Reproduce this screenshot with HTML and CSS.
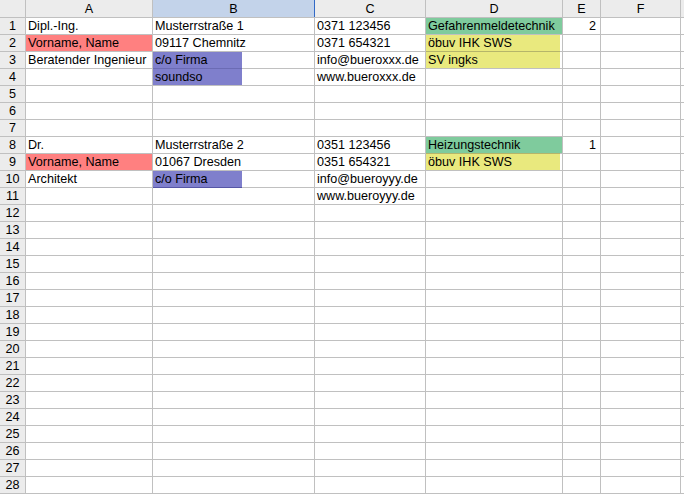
FILE: index.html
```html
<!DOCTYPE html>
<html lang="de">

<head>
    <meta charset="UTF-8">
    <title>Tabelle1</title>
    <link rel="stylesheet" href="styles.css">
</head>

<body>
    <div class="sheet">
        <!-- Spaltenköpfe -->
        <div class="hd"></div><div class="hd">A</div><div class="hd sel">B</div><div class="hd">C</div><div class="hd">D</div><div class="hd">E</div><div class="hd">F</div><div class="hd"></div>

        <div class="rh">1</div><div class="c">Dipl.-Ing.</div><div class="c">Musterrstraße 1</div><div class="c">0371 123456</div><div class="c green">Gefahrenmeldetechnik</div><div class="c num">2</div><div class="c"></div><div class="c"></div>
        <div class="rh">2</div><div class="c red">Vorname, Name</div><div class="c">09117 Chemnitz</div><div class="c">0371 654321</div><div class="c part"><span class="yellow line_b">öbuv IHK SWS</span></div><div class="c"></div><div class="c"></div><div class="c"></div>
        <div class="rh">3</div><div class="c">Beratender Ingenieur</div><div class="c part"><span class="purple line_b">c/o Firma</span></div><div class="c">info@bueroxxx.de</div><div class="c part"><span class="yellow">SV ingks</span></div><div class="c"></div><div class="c"></div><div class="c"></div>
        <div class="rh">4</div><div class="c"></div><div class="c part"><span class="purple">soundso</span></div><div class="c">www.bueroxxx.de</div><div class="c"></div><div class="c"></div><div class="c"></div><div class="c"></div>
        <div class="rh">5</div><div class="c"></div><div class="c"></div><div class="c"></div><div class="c"></div><div class="c"></div><div class="c"></div><div class="c"></div>
        <div class="rh">6</div><div class="c"></div><div class="c"></div><div class="c"></div><div class="c"></div><div class="c"></div><div class="c"></div><div class="c"></div>
        <div class="rh">7</div><div class="c"></div><div class="c"></div><div class="c"></div><div class="c"></div><div class="c"></div><div class="c"></div><div class="c"></div>
        <div class="rh">8</div><div class="c">Dr.</div><div class="c">Musterrstraße 2</div><div class="c">0351 123456</div><div class="c green">Heizungstechnik</div><div class="c num">1</div><div class="c"></div><div class="c"></div>
        <div class="rh">9</div><div class="c red">Vorname, Name</div><div class="c">01067 Dresden</div><div class="c">0351 654321</div><div class="c part"><span class="yellow line_t">öbuv IHK SWS</span></div><div class="c"></div><div class="c"></div><div class="c"></div>
        <div class="rh">10</div><div class="c">Architekt</div><div class="c part"><span class="purple line_b2">c/o Firma</span></div><div class="c">info@bueroyyy.de</div><div class="c"></div><div class="c"></div><div class="c"></div><div class="c"></div>
        <div class="rh">11</div><div class="c"></div><div class="c"></div><div class="c">www.bueroyyy.de</div><div class="c"></div><div class="c"></div><div class="c"></div><div class="c"></div>
        <div class="rh">12</div><div class="c"></div><div class="c"></div><div class="c"></div><div class="c"></div><div class="c"></div><div class="c"></div><div class="c"></div>
        <div class="rh">13</div><div class="c"></div><div class="c"></div><div class="c"></div><div class="c"></div><div class="c"></div><div class="c"></div><div class="c"></div>
        <div class="rh">14</div><div class="c"></div><div class="c"></div><div class="c"></div><div class="c"></div><div class="c"></div><div class="c"></div><div class="c"></div>
        <div class="rh">15</div><div class="c"></div><div class="c"></div><div class="c"></div><div class="c"></div><div class="c"></div><div class="c"></div><div class="c"></div>
        <div class="rh">16</div><div class="c"></div><div class="c"></div><div class="c"></div><div class="c"></div><div class="c"></div><div class="c"></div><div class="c"></div>
        <div class="rh">17</div><div class="c"></div><div class="c"></div><div class="c"></div><div class="c"></div><div class="c"></div><div class="c"></div><div class="c"></div>
        <div class="rh">18</div><div class="c"></div><div class="c"></div><div class="c"></div><div class="c"></div><div class="c"></div><div class="c"></div><div class="c"></div>
        <div class="rh">19</div><div class="c"></div><div class="c"></div><div class="c"></div><div class="c"></div><div class="c"></div><div class="c"></div><div class="c"></div>
        <div class="rh">20</div><div class="c"></div><div class="c"></div><div class="c"></div><div class="c"></div><div class="c"></div><div class="c"></div><div class="c"></div>
        <div class="rh">21</div><div class="c"></div><div class="c"></div><div class="c"></div><div class="c"></div><div class="c"></div><div class="c"></div><div class="c"></div>
        <div class="rh">22</div><div class="c"></div><div class="c"></div><div class="c"></div><div class="c"></div><div class="c"></div><div class="c"></div><div class="c"></div>
        <div class="rh">23</div><div class="c"></div><div class="c"></div><div class="c"></div><div class="c"></div><div class="c"></div><div class="c"></div><div class="c"></div>
        <div class="rh">24</div><div class="c"></div><div class="c"></div><div class="c"></div><div class="c"></div><div class="c"></div><div class="c"></div><div class="c"></div>
        <div class="rh">25</div><div class="c"></div><div class="c"></div><div class="c"></div><div class="c"></div><div class="c"></div><div class="c"></div><div class="c"></div>
        <div class="rh">26</div><div class="c"></div><div class="c"></div><div class="c"></div><div class="c"></div><div class="c"></div><div class="c"></div><div class="c"></div>
        <div class="rh">27</div><div class="c"></div><div class="c"></div><div class="c"></div><div class="c"></div><div class="c"></div><div class="c"></div><div class="c"></div>
        <div class="rh">28</div><div class="c"></div><div class="c"></div><div class="c"></div><div class="c"></div><div class="c"></div><div class="c"></div><div class="c"></div>
    </div>
</body>

</html>
```

FILE: styles.css
```css
* {
    margin: 0;
    padding: 0;
    box-sizing: border-box;
}

body {
    background-color: #fff;
    font-family: "Liberation Sans", Arial, sans-serif;
    font-size: 12.6px;
    color: #000;
    overflow: hidden;
}

/* Gitterlinien = Hintergrund, der durch die Lücken scheint */
.sheet {
    display: grid;
    grid-template-columns: 25px 126px 161px 110px 136px 37px 79px 1fr;
    grid-template-rows: 17px;
    grid-auto-rows: 16px;
    gap: 1px;
    padding-bottom: 1px;
    background-color: #c0c0c0;
}

.hd {
    padding-top: 1px;
    line-height: 16px;
    text-align: center;
    background-color: #ececec;
}

.hd.sel {
    background-color: #c3d3ea;
    box-shadow: 1px 0 0 #3169c6;
}

.rh {
    padding-top: 1px;
    line-height: 15px;
    text-align: center;
    background-color: #ececec;
}

.c {
    padding: 1px 2px 0;
    line-height: 15px;
    white-space: nowrap;
    background-color: #fff;
}

.num {
    text-align: right;
    padding-right: 4px;
}

.red {
    background-color: #ff8080;
}

.green {
    background-color: #7fcb9d;
}

/* Felder, die nur einen Teil der Zelle füllen */
.c.part {
    padding: 0;
}

.part span {
    display: block;
    height: 16px;
    padding: 1px 2px 0;
}

.purple {
    width: 89px;
    background-color: #7f7fcc;
}

.yellow {
    width: 134px;
    background-color: #e9e97e;
}

.purple.line_b {
    box-shadow: 0 1px 0 #6b6bb4;
}

.purple.line_b2 {
    box-shadow: 0 1px 0 #5656a6;
}

.yellow.line_b {
    box-shadow: 0 1px 0 #b5b56a;
}

.yellow.line_t {
    box-shadow: 0 -1px 0 #b5b56a;
}
```
